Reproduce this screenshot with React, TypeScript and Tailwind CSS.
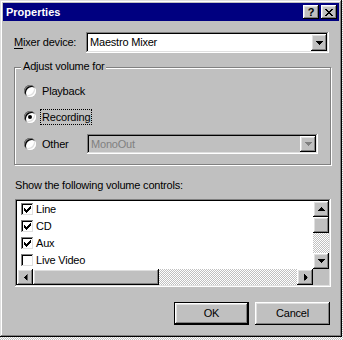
import React from "react";

const raised =
  "shadow-[inset_-1px_-1px_#000,inset_1px_1px_#fff,inset_-2px_-2px_#808080,inset_2px_2px_#dfdfdf]";
const sunken =
  "shadow-[inset_-1px_-1px_#fff,inset_1px_1px_#808080,inset_-2px_-2px_#dfdfdf,inset_2px_2px_#000]";
const dither =
  "bg-[repeating-conic-gradient(#c0c0c0_0_25%,#ffffff_0_50%)] bg-[length:2px_2px]";

type Dir = "up" | "down" | "left" | "right";

function Arrow({ dir = "down", color = "#000" }: { dir?: Dir; color?: string }) {
  const rot =
    dir === "up" ? "rotate-180" : dir === "left" ? "rotate-90" : dir === "right" ? "-rotate-90" : "";
  return (
    <svg width="7" height="4" viewBox="0 0 7 4" className={rot} shapeRendering="crispEdges">
      <path
        d="M0 0h7v1h-1v1h-1v1h-1v1h-1v-1h-1v-1h-1v-1h-1z"
        fill={color}
      />
    </svg>
  );
}

function ArrowButton({ dir, className = "" }: { dir: Dir; className?: string }) {
  return (
    <div className={`w-[16px] h-[16px] bg-[#c0c0c0] flex items-center justify-center ${raised} ${className}`}>
      <Arrow dir={dir} />
    </div>
  );
}

function Radio({ checked }: { checked?: boolean }) {
  return (
    <div
      className={`w-[12px] h-[12px] rounded-full bg-white flex items-center justify-center shrink-0 shadow-[inset_1px_1px_#808080,inset_-1px_-1px_#fff,inset_2px_2px_#000,inset_-2px_-2px_#dfdfdf]`}
    >
      {checked && <div className="w-[4px] h-[4px] rounded-full bg-black" />}
    </div>
  );
}

function Checkbox({ checked }: { checked?: boolean }) {
  return (
    <div className={`w-[13px] h-[13px] bg-white shrink-0 flex items-center justify-center ${sunken}`}>
      {checked && (
        <svg width="7" height="7" viewBox="0 0 7 7" shapeRendering="crispEdges">
          <path
            d="M6 0h1v1h-1z M5 1h2v1h-2z M0 2h1v1h-1z M4 2h3v1h-3z M0 3h2v1h-2z M3 3h3v1h-3z M0 4h5v1h-5z M1 5h3v1h-3z M2 6h1v1h-1z"
            fill="#000"
          />
        </svg>
      )}
    </div>
  );
}

const ITEMS = [
  { label: "Line", checked: true },
  { label: "CD", checked: true },
  { label: "Aux", checked: true },
  { label: "Live Video", checked: false },
];

export default function App() {
  return (
    <div
      className={`w-[343px] h-[340px] overflow-hidden font-['Liberation_Sans',Arial,sans-serif] text-[11px] leading-[13px] text-black ${dither}`}
    >
      <div className="w-[342px] h-[337px] p-[3px] bg-[#c0c0c0] flex flex-col shadow-[inset_-1px_-1px_#000,inset_1px_1px_#dfdfdf,inset_-2px_-2px_#808080,inset_2px_2px_#fff]">
        {/* title bar */}
        <div className="h-[18px] bg-[#000080] flex items-center justify-between pl-[3px] pr-[2px]">
          <span className="text-white font-bold text-[11px]">Properties</span>
          <div className="flex gap-[2px]">
            <div className={`w-[16px] h-[14px] bg-[#c0c0c0] flex items-center justify-center font-bold text-[11px] leading-none ${raised}`}>
              ?
            </div>
            <div className={`w-[16px] h-[14px] bg-[#c0c0c0] flex items-center justify-center ${raised}`}>
              <svg width="8" height="7" viewBox="0 0 8 7" shapeRendering="crispEdges">
                <path
                  d="M0 0h2v1h-2z M6 0h2v1h-2z M1 1h2v1h-2z M5 1h2v1h-2z M2 2h4v1h-4z M3 3h2v1h-2z M2 4h4v1h-4z M1 5h2v1h-2z M5 5h2v1h-2z M0 6h2v1h-2z M6 6h2v1h-2z"
                  fill="#000"
                />
              </svg>
            </div>
          </div>
        </div>

        <div className="ml-[11px] w-[317px] tracking-[-0.2px]">
          {/* mixer device */}
          <div className="mt-[11px] flex items-center h-[21px]">
            <span className="w-[72px]">
              <span className="underline underline-offset-2">M</span>ixer device:
            </span>
            <div className={`w-[243px] h-[21px] bg-white flex items-center pl-[4px] pr-[2px] ${sunken}`}>
              <span className="flex-1">Maestro Mixer</span>
              <ArrowButton dir="down" className="h-[17px]" />
            </div>
          </div>

          {/* adjust volume group */}
          <div className="relative mt-[14px] h-[98px] border border-[#808080] shadow-[inset_1px_1px_#fff,1px_1px_#fff]">
            <span className="absolute left-[6px] -top-[8px] pl-[2px] pr-[1px] bg-[#c0c0c0]">
              Adjust volume for
            </span>
            <div className="pt-[13px] pl-[9px] flex flex-col">
              <div className="h-[20px] flex items-center">
                <Radio />
                <span className="ml-[6px]">Playback</span>
              </div>
              <div className="mt-[6px] h-[20px] flex items-center">
                <Radio checked />
                <span className="ml-[4px] px-[1px] h-[16px] flex items-center border border-dotted border-black">
                  Recording
                </span>
              </div>
              <div className="mt-[7px] h-[20px] flex items-center">
                <Radio />
                <span className="ml-[6px] w-[45px]">Other</span>
                <div className={`w-[231px] h-[20px] bg-[#c0c0c0] flex items-center pl-[4px] pr-[2px] ${sunken}`}>
                  <span className="flex-1 text-[#808080]">MonoOut</span>
                  <div className={`w-[16px] h-[16px] flex items-center justify-center ${raised}`}>
                    <Arrow dir="down" color="#808080" />
                  </div>
                </div>
              </div>
            </div>
          </div>

          <div className="mt-[14px] ml-[1px]">Show the following volume controls:</div>

          {/* list box */}
          <div className={`mt-[7px] ml-[1px] w-[316px] h-[88px] p-[2px] bg-white flex flex-col ${sunken}`}>
            <div className="flex h-[68px]">
              <div className="flex-1 flex flex-col">
                {ITEMS.map((it) => (
                  <div key={it.label} className="h-[17px] flex items-center pl-[4px]">
                    <Checkbox checked={it.checked} />
                    <span className="ml-[2px]">{it.label}</span>
                  </div>
                ))}
              </div>
              <div className="w-[16px] flex flex-col">
                <ArrowButton dir="up" />
                <div className={`h-[16px] bg-[#c0c0c0] ${raised}`} />
                <div className={`flex-1 ${dither}`} />
                <ArrowButton dir="down" />
              </div>
            </div>
            <div className="flex h-[16px]">
              <ArrowButton dir="left" />
              <div className={`w-[126px] bg-[#c0c0c0] ${raised}`} />
              <div className={`flex-1 ${dither}`} />
              <ArrowButton dir="right" />
              <div className="w-[16px] bg-[#c0c0c0]" />
            </div>
          </div>

          {/* buttons */}
          <div className="mt-[15px] flex justify-end gap-[6px] pr-[1px]">
            <button className="w-[75px] h-[23px] border border-black bg-[#c0c0c0] p-0">
              <div className={`w-full h-full flex items-center justify-center ${raised}`}>OK</div>
            </button>
            <button className={`w-[75px] h-[23px] bg-[#c0c0c0] flex items-center justify-center ${raised}`}>
              Cancel
            </button>
          </div>
        </div>
      </div>
    </div>
  );
}
